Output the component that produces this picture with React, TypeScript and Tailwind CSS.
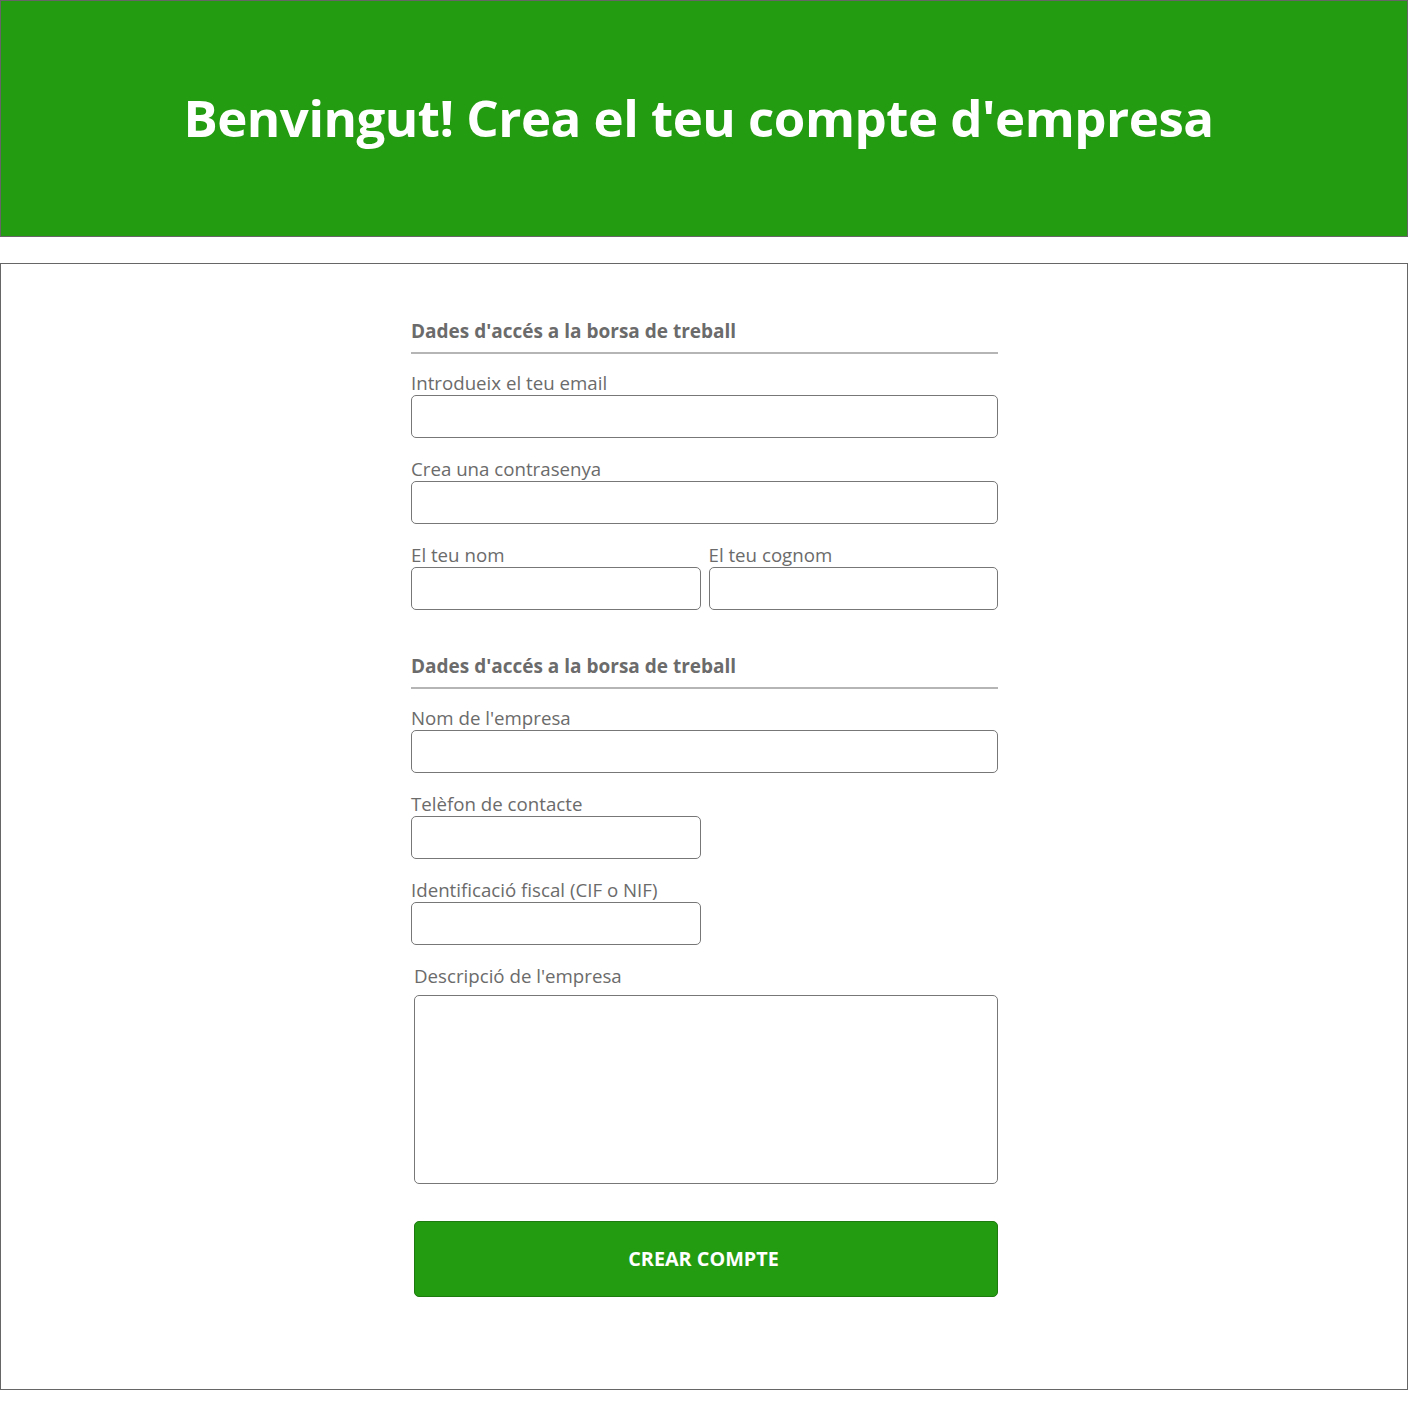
export default function App() {
  const label = 'block text-[18.7px] leading-[24px] text-[#6b6b6b]';
  const input = 'block h-[43px] border border-[#777] rounded-[5px] bg-white';

  return (
    <div className="w-[1408px] bg-white" style={{ fontFamily: '"Open Sans", sans-serif' }}>
      <header className="h-[237px] border border-[#666] bg-[#249c11] flex items-center justify-center pr-[11px]">
        <h1 className="text-white font-bold text-[51px] leading-none -mt-[2px] tracking-[-0.5px]">
          Benvingut! Crea el teu compte d'empresa
        </h1>
      </header>

      <div className="mt-[26px] border border-[#666] h-[1127px]">
        <form className="w-[587px] ml-[410px] pt-[53px]" onSubmit={(e) => e.preventDefault()}>
          <h2 className="text-[19px] leading-[28px] font-bold text-[#6b6b6b]">Dades d'accés a la borsa de treball</h2>
          <div className="mt-[7px] h-[2px] bg-[#b5b5b5]" />

          <div className="mt-[17px]">
            <label className={label}>Introdueix el teu email</label>
            <input className={`${input} w-full`} type="email" />
          </div>
          <div className="mt-[19px]">
            <label className={label}>Crea una contrasenya</label>
            <input className={`${input} w-full`} type="password" />
          </div>
          <div className="mt-[19px] grid grid-cols-2 gap-[8px]">
            <div>
              <label className={label}>El teu nom</label>
              <input className={`${input} w-full`} />
            </div>
            <div>
              <label className={label}>El teu cognom</label>
              <input className={`${input} w-full`} />
            </div>
          </div>

          <h2 className="mt-[42px] text-[19px] leading-[28px] font-bold text-[#6b6b6b]">Dades d'accés a la borsa de treball</h2>
          <div className="mt-[7px] h-[2px] bg-[#b5b5b5]" />

          <div className="mt-[17px]">
            <label className={label}>Nom de l'empresa</label>
            <input className={`${input} w-full`} />
          </div>
          <div className="mt-[19px]">
            <label className={label}>Telèfon de contacte</label>
            <input className={`${input} w-[290px]`} />
          </div>
          <div className="mt-[19px]">
            <label className={label}>Identificació fiscal (CIF o NIF)</label>
            <input className={`${input} w-[290px]`} />
          </div>
          <div className="mt-[19px] ml-[3px]">
            <label className={label}>Descripció de l'empresa</label>
            <textarea className="mt-[7px] block w-full h-[189px] border border-[#777] rounded-[5px] resize-none" />
          </div>

          <button
            type="submit"
            className="mt-[37px] ml-[3px] w-[584px] h-[76px] rounded-[5px] bg-[#249c11] border border-[#1d7a0e] text-white font-bold text-[19.8px] flex items-center justify-center pr-[5px]"
          >
            CREAR COMPTE
          </button>
        </form>
      </div>
    </div>
  );
}
